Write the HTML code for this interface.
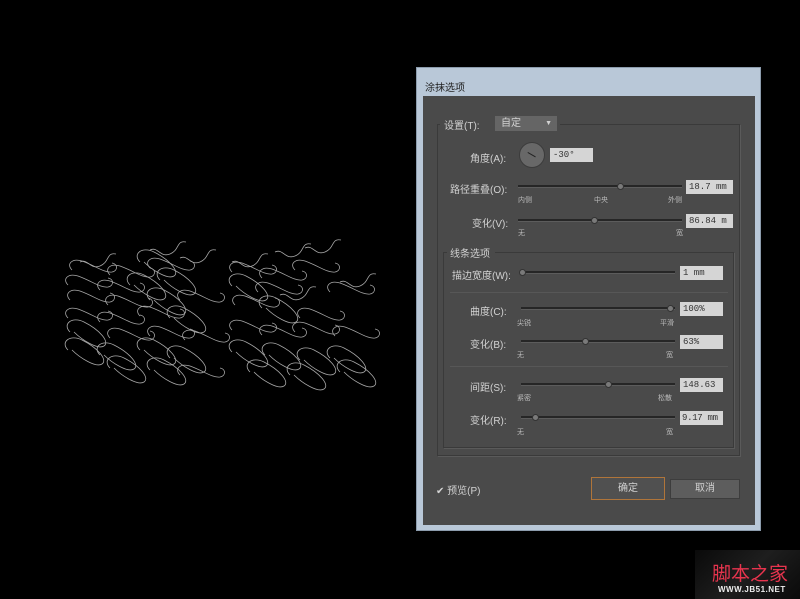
<!DOCTYPE html>
<html><head><meta charset="utf-8"><style>
*{margin:0;padding:0;box-sizing:border-box}
body{width:800px;height:599px;background:#000;position:relative;overflow:hidden;font-family:"Liberation Sans","Noto Sans CJK SC",sans-serif;font-size:10px;color:#d2d2d2}
.a{position:absolute;white-space:nowrap}
.frame{position:absolute;left:416px;top:67px;width:345px;height:464px;background:#b9c8d8;border:1px solid #8c9cad}
.title{position:absolute;left:425px;top:79px;color:#222;font-size:10px}
.inner{position:absolute;left:423px;top:96px;width:332px;height:429px;background:#4a4a4a}
.box{position:absolute;border:1px solid #3a3a3a;box-shadow:1px 1px 0 #5a5a5a}
.inp{position:absolute;background:#d5d5d5;color:#333;font-family:"Liberation Mono",monospace;font-size:9px;padding-left:3px;line-height:14px;height:14px;white-space:nowrap;overflow:hidden}
.tr{position:absolute;height:3px;background:#262626;border-bottom:1px solid #5c5c5c}
.kn{position:absolute;width:7px;height:7px;border-radius:50%;background:#7a7a7a;border:1px solid #333}
.sm{font-size:7px;color:#bbb}
.sep{position:absolute;height:1px;background:#3a3a3a;border-bottom:1px solid #575757}
</style></head><body>
<svg class="a" style="left:0;top:0" width="400" height="420" viewBox="0 0 400 420">
<defs>
<path id="s" d="M0,0 c-6,-6 0,-12 10,-9 c14,5 22,12 30,11 c6,-1 6,-8 0,-9" fill="none" stroke="#a8a8a8" stroke-width="0.8"/>
<path id="l" d="M0,0 c-8,-8 2,-16 14,-10 c16,8 26,20 20,24 c-6,4 -22,-6 -30,-14" fill="none" stroke="#a8a8a8" stroke-width="0.8"/>
<path id="w" d="M0,0 c8,-4 10,8 20,4 c10,-4 6,-14 16,-12" fill="none" stroke="#a8a8a8" stroke-width="0.8"/>
</defs>
<g>
<use href="#w" x="80" y="262"/><use href="#w" x="150" y="250"/><use href="#w" x="180" y="258"/>
<use href="#s" x="72" y="270"/><use href="#s" x="110" y="275"/><use href="#s" x="150" y="268"/><use href="#l" x="140" y="262"/>
<use href="#s" x="68" y="285"/><use href="#s" x="100" y="290"/><use href="#l" x="130" y="285"/><use href="#l" x="160" y="280"/>
<use href="#s" x="70" y="300"/><use href="#s" x="108" y="305"/><use href="#l" x="150" y="300"/><use href="#s" x="180" y="300"/>
<use href="#s" x="68" y="318"/><use href="#s" x="100" y="322"/><use href="#s" x="140" y="316"/><use href="#l" x="170" y="318"/>
<use href="#l" x="70" y="332"/><use href="#s" x="110" y="338"/><use href="#s" x="150" y="336"/><use href="#s" x="185" y="340"/>
<use href="#l" x="68" y="350"/><use href="#l" x="100" y="355"/><use href="#l" x="140" y="350"/><use href="#l" x="170" y="358"/>
<use href="#l" x="110" y="368"/><use href="#l" x="150" y="370"/><use href="#s" x="180" y="375"/>
<use href="#w" x="232" y="262"/><use href="#w" x="275" y="252"/><use href="#w" x="305" y="248"/><use href="#w" x="340" y="282"/>
<use href="#s" x="232" y="272"/><use href="#s" x="262" y="278"/><use href="#s" x="295" y="270"/><use href="#s" x="330" y="292"/>
<use href="#l" x="232" y="286"/><use href="#s" x="258" y="292"/><use href="#w" x="280" y="295"/>
<use href="#s" x="235" y="305"/><use href="#l" x="262" y="308"/><use href="#s" x="300" y="318"/>
<use href="#s" x="232" y="330"/><use href="#s" x="262" y="335"/><use href="#s" x="295" y="332"/><use href="#s" x="335" y="336"/>
<use href="#l" x="232" y="352"/><use href="#l" x="265" y="355"/><use href="#l" x="300" y="360"/><use href="#l" x="330" y="358"/>
<use href="#l" x="250" y="372"/><use href="#l" x="290" y="375"/><use href="#l" x="340" y="372"/>
</g>
</svg>

<div class="frame"></div>
<div class="title">涂抹选项</div>
<div class="inner"></div>

<div class="box" style="left:437px;top:124px;width:303px;height:332px"></div>
<div class="a" style="left:440px;top:116px;width:120px;height:16px;background:#4a4a4a"></div>
<div class="a" style="left:444px;top:117px">设置(T):</div>
<div class="a" style="left:495px;top:116px;width:62px;height:15px;background:#656565;padding-left:6px;line-height:15px">自定<span style="position:absolute;right:5px;font-size:7px">▼</span></div>

<div class="a" style="left:470px;top:150px">角度(A):</div>
<div class="a" style="left:519px;top:142px;width:26px;height:26px;border-radius:50%;background:#686868;border:1px solid #3c3c3c"></div>
<div class="a" style="left:528px;top:152px;width:9px;height:1px;background:#222;transform:rotate(30deg);transform-origin:0 0"></div>
<div class="inp" style="left:550px;top:148px;width:43px">-30°</div>

<div class="a" style="left:450px;top:181px">路径重叠(O):</div>
<div class="tr" style="left:518px;top:185px;width:164px"></div><div class="kn" style="left:617px;top:183px"></div>
<div class="inp" style="left:686px;top:180px;width:47px">18.7 mm</div>
<div class="a sm" style="left:518px;top:195px">内侧</div><div class="a sm" style="left:594px;top:195px">中央</div><div class="a sm" style="left:668px;top:195px">外侧</div>

<div class="a" style="left:472px;top:215px">变化(V):</div>
<div class="tr" style="left:518px;top:219px;width:164px"></div><div class="kn" style="left:591px;top:217px"></div>
<div class="inp" style="left:686px;top:214px;width:47px">86.84 m</div>
<div class="a sm" style="left:518px;top:228px">无</div><div class="a sm" style="left:676px;top:228px">宽</div>

<div class="box" style="left:443px;top:252px;width:291px;height:196px"></div>
<div class="a" style="left:447px;top:244px;width:48px;height:14px;background:#4a4a4a"></div>
<div class="a" style="left:450px;top:245px">线条选项</div>

<div class="a" style="left:452px;top:267px">描边宽度(W):</div>
<div class="tr" style="left:521px;top:271px;width:154px"></div><div class="kn" style="left:519px;top:269px"></div>
<div class="inp" style="left:680px;top:266px;width:43px">1 mm</div>
<div class="sep" style="left:450px;top:292px;width:278px"></div>

<div class="a" style="left:470px;top:303px">曲度(C):</div>
<div class="tr" style="left:521px;top:307px;width:154px"></div><div class="kn" style="left:667px;top:305px"></div>
<div class="inp" style="left:680px;top:302px;width:43px">100%</div>
<div class="a sm" style="left:517px;top:318px">尖锐</div><div class="a sm" style="left:660px;top:318px">平滑</div>

<div class="a" style="left:470px;top:336px">变化(B):</div>
<div class="tr" style="left:521px;top:340px;width:154px"></div><div class="kn" style="left:582px;top:338px"></div>
<div class="inp" style="left:680px;top:335px;width:43px">63%</div>
<div class="a sm" style="left:517px;top:350px">无</div><div class="a sm" style="left:666px;top:350px">宽</div>
<div class="sep" style="left:450px;top:366px;width:278px"></div>

<div class="a" style="left:470px;top:379px">间距(S):</div>
<div class="tr" style="left:521px;top:383px;width:154px"></div><div class="kn" style="left:605px;top:381px"></div>
<div class="inp" style="left:680px;top:378px;width:43px">148.63</div>
<div class="a sm" style="left:517px;top:393px">紧密</div><div class="a sm" style="left:658px;top:393px">松散</div>

<div class="a" style="left:470px;top:412px">变化(R):</div>
<div class="tr" style="left:521px;top:416px;width:154px"></div><div class="kn" style="left:532px;top:414px"></div>
<div class="inp" style="left:680px;top:411px;width:43px;padding-left:2px;letter-spacing:-0.3px">9.17 mm</div>
<div class="a sm" style="left:517px;top:427px">无</div><div class="a sm" style="left:666px;top:427px">宽</div>

<div class="a" style="left:436px;top:482px">✔ 预览(P)</div>
<div class="a" style="left:591px;top:477px;width:74px;height:23px;border:1px solid #b0753a;background:#505050;text-align:center;line-height:21px">确定</div>
<div class="a" style="left:670px;top:479px;width:70px;height:20px;background:#5d5d5d;border:1px solid #3d3d3d;text-align:center;line-height:18px">取消</div>

<div class="a" style="left:695px;top:550px;width:105px;height:49px;background:linear-gradient(135deg,#0a0a0a,#1e1e1e 50%,#0a0a0a)"></div>
<div class="a" style="left:712px;top:559px;font-size:19px;color:#e8344e;font-family:'Noto Sans CJK SC',sans-serif">脚本之家</div>
<div class="a" style="left:718px;top:585px;font-size:8px;color:#eee;font-weight:bold;letter-spacing:0.5px">WWW.JB51.NET</div>
</body></html>
